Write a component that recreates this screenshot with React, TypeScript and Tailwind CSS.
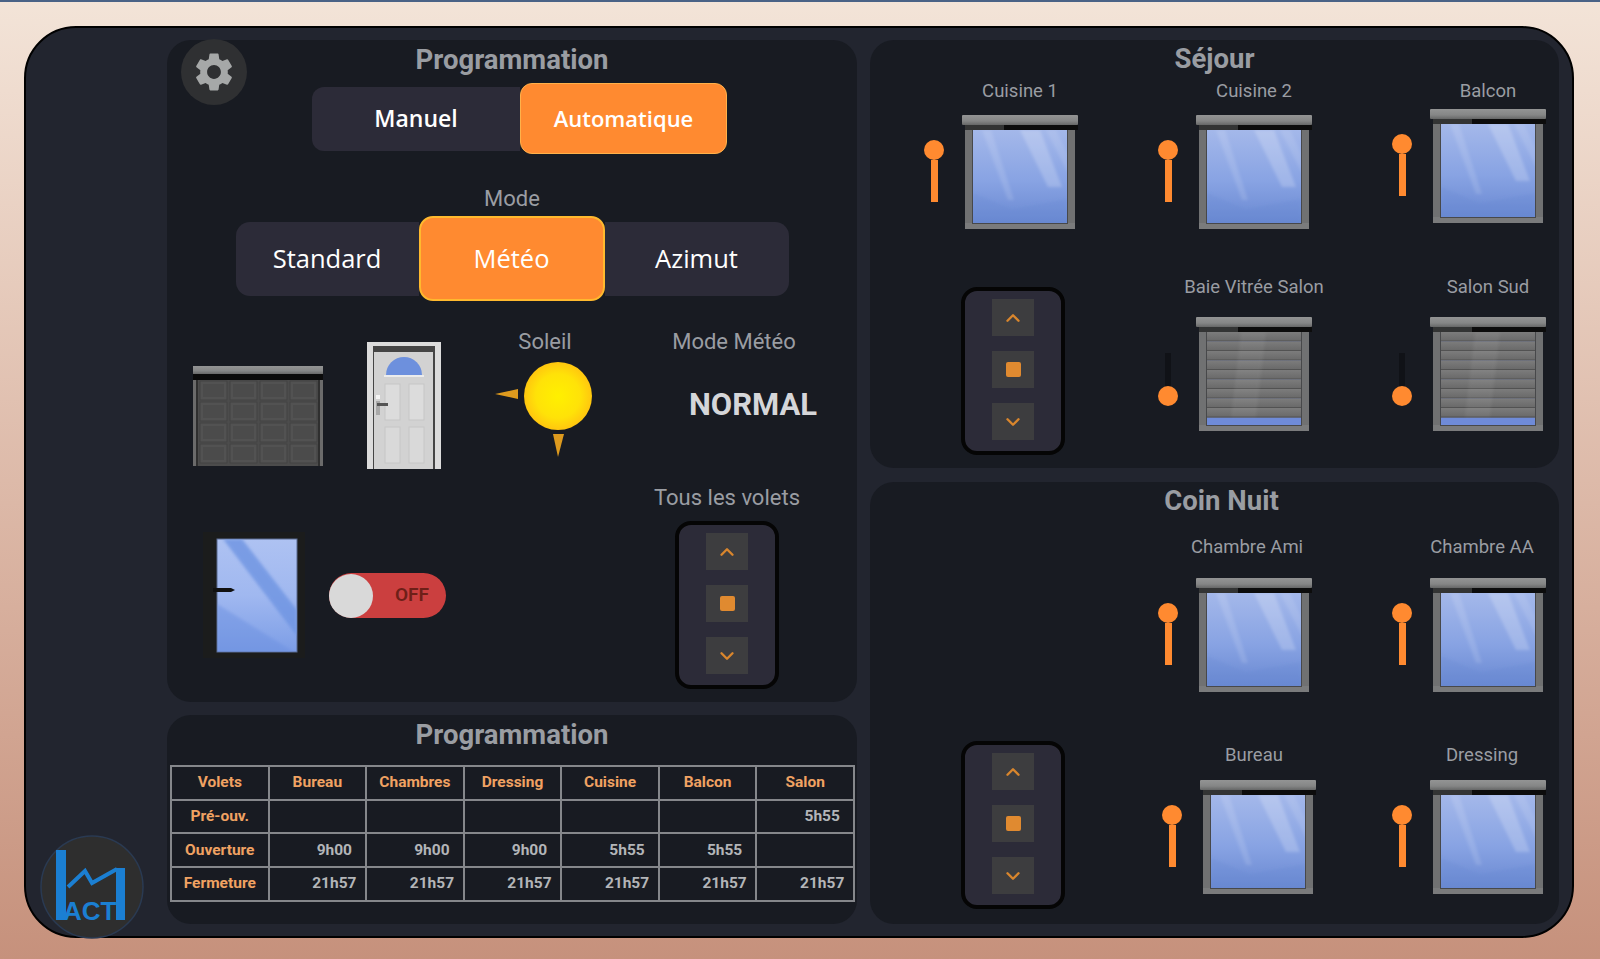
import { ChevronUp, ChevronDown } from "lucide-react";
import { MdSettings } from "react-icons/md";

function Defs() {
  return (
    <svg width="0" height="0" className="absolute">
      <defs>
        <linearGradient id="glass" x1="0" y1="0" x2="0" y2="1">
          <stop offset="0" stopColor="#a4b8ea" />
          <stop offset="0.55" stopColor="#88a3e3" />
          <stop offset="1" stopColor="#6a89d2" />
        </linearGradient>
        <linearGradient id="housing" x1="0" y1="0" x2="0" y2="1">
          <stop offset="0" stopColor="#939494" />
          <stop offset="0.6" stopColor="#858686" />
          <stop offset="1" stopColor="#666767" />
        </linearGradient>
        <linearGradient id="slat" x1="0" y1="0" x2="0" y2="1">
          <stop offset="0" stopColor="#7c7c7c" />
          <stop offset="1" stopColor="#686868" />
        </linearGradient>
        <radialGradient id="sun" cx="0.5" cy="0.5" r="0.5">
          <stop offset="0" stopColor="#fff000" />
          <stop offset="0.65" stopColor="#ffe208" />
          <stop offset="1" stopColor="#ffc60f" />
        </radialGradient>
        <linearGradient id="doorglass" x1="0" y1="0" x2="0" y2="1">
          <stop offset="0" stopColor="#aec2f2" />
          <stop offset="0.5" stopColor="#a0b8f0" />
          <stop offset="1" stopColor="#7c9de6" />
        </linearGradient>
        <filter id="soft" x="-20%" y="-20%" width="140%" height="140%">
          <feGaussianBlur stdDeviation="1.4" />
        </filter>
        <clipPath id="glassclip">
          <rect x="11" y="15" width="94" height="93" />
        </clipPath>
        <clipPath id="doorclip">
          <rect x="14" y="7" width="80" height="113" />
        </clipPath>
      </defs>
    </svg>
  );
}

function WindowArt({ closed }: { closed?: boolean }) {
  return (
    <svg width="116" height="114" viewBox="0 0 116 114" className="block shrink-0">
      <rect x="3" y="10" width="110" height="104" fill="#707172" />
      <rect x="3" y="108" width="110" height="6" fill="#7a7b7c" />
      <rect x="10" y="14" width="96" height="95" fill="#47484a" />
      <rect x="11" y="15" width="94" height="93" fill={closed ? "#6f8bd8" : "url(#glass)"} />
      {!closed && (
        <g clipPath="url(#glassclip)">
          <g filter="url(#soft)">
            <polygon points="20,15 29,15 52,85 46,85" fill="#ffffff" opacity="0.12" />
            <polygon points="58,15 78,15 100,72 86,72" fill="#ffffff" opacity="0.2" />
            <polygon points="84,15 94,15 106,40 106,58" fill="#ffffff" opacity="0.1" />
            <polygon points="11,78 50,94 105,84 105,108 11,108" fill="#5f80cf" opacity="0.18" />
          </g>
        </g>
      )}
      {closed && (
        <g>
          {[15, 24.5, 34, 43.5, 53, 62.5, 72, 81.5, 91].map((y) => (
            <g key={y}>
              <rect x="11" y={y} width="94" height="9.5" fill="url(#slat)" />
              <rect x="11" y={y + 8.5} width="94" height="1" fill="#525252" />
            </g>
          ))}
          <polygon points="45,15 70,15 60,100 35,100" fill="#ffffff" opacity="0.05" filter="url(#soft)" />
        </g>
      )}
      <rect x="42" y="10" width="74" height="5" fill="#0c0c0c" />
      <rect x="3" y="10" width="39" height="5" fill="#333434" />
      <rect x="0" y="0" width="116" height="10" rx="1" fill="url(#housing)" />
    </svg>
  );
}

function Slider({ open }: { open: boolean }) {
  if (open) {
    return (
      <div className="flex w-5 shrink-0 flex-col items-center mt-[25px]">
        <div className="h-5 w-5 rounded-full bg-[#ff8a30]" />
        <div className="h-[42px] w-[7px] bg-[#ff8a30]" />
      </div>
    );
  }
  return (
    <div className="flex w-5 shrink-0 flex-col items-center mt-[36px]">
      <div className="h-[33px] w-[6px] bg-[#101217]" />
      <div className="h-5 w-5 rounded-full bg-[#ff8a30]" />
    </div>
  );
}

function Unit({
  label,
  closed,
  labelClass = "",
  bodyClass = "",
  className = "",
}: {
  label: string;
  closed?: boolean;
  labelClass?: string;
  bodyClass?: string;
  className?: string;
}) {
  return (
    <div className={"flex flex-col " + className}>
      <div className={"ml-[38px] flex h-6 w-[116px] justify-center whitespace-nowrap text-[18.5px] leading-6 text-[#9a9da3] " + labelClass}>
        {label}
      </div>
      <div className={"flex items-start gap-[18px] " + bodyClass}>
        <Slider open={!closed} />
        <WindowArt closed={closed} />
      </div>
    </div>
  );
}

function Remote({ className = "" }: { className?: string }) {
  const btn = "flex h-[37px] w-[42px] items-center justify-center bg-[#3d3d3f] text-[#d9862d]";
  return (
    <div className={"flex h-[168px] w-[104px] shrink-0 flex-col items-center gap-[15px] rounded-[16px] border-4 border-[#050505] bg-[#2c2b38] pt-[8px] " + className}>
      <div className={btn}>
        <ChevronUp size={22} strokeWidth={2.6} />
      </div>
      <div className={btn}>
        <div className="h-[15px] w-[15px] rounded-[2px] bg-[#e08a30]" />
      </div>
      <div className={btn}>
        <ChevronDown size={22} strokeWidth={2.6} />
      </div>
    </div>
  );
}

function Garage() {
  const rows = [15, 36, 57, 78];
  const cols = [7, 37, 67, 97];
  return (
    <svg width="130" height="100" viewBox="0 0 130 100" className="block">
      <rect x="0" y="14" width="130" height="86" fill="#2f2f2f" />
      <rect x="0" y="14" width="3" height="86" fill="#6b6b6b" />
      <rect x="127" y="14" width="3" height="86" fill="#6b6b6b" />
      <rect x="5" y="14" width="120" height="86" fill="#4c4c4c" />
      {rows.map((y) =>
        cols.map((x) => (
          <g key={x + "-" + y}>
            <rect x={x} y={y} width="27" height="19" fill="#525252" stroke="#434343" strokeWidth="1" />
            <rect x={x + 3} y={y + 3} width="21" height="13" fill="#4b4b4b" />
          </g>
        ))
      )}
      <rect x="0" y="8" width="130" height="6" fill="#0a0a0a" />
      <rect x="0" y="0" width="130" height="8" fill="url(#housing)" />
    </svg>
  );
}

function Door() {
  return (
    <svg width="74" height="127" viewBox="0 0 74 127" className="block">
      <rect x="0" y="0" width="74" height="127" fill="#dcdcdc" />
      <rect x="6" y="4" width="62" height="123" fill="#454545" />
      <rect x="7" y="10" width="59" height="117" fill="#d2d2d2" />
      <path d="M19 33 A18 18 0 0 1 55 33 Z" fill="#6d90dd" />
      <rect x="17" y="33" width="40" height="2" fill="#ececec" />
      <rect x="18" y="42" width="15" height="36" fill="#dcdcdc" stroke="#c6c6c6" />
      <rect x="42" y="42" width="15" height="36" fill="#dcdcdc" stroke="#c6c6c6" />
      <rect x="18" y="85" width="15" height="36" fill="#d9d9d9" stroke="#c6c6c6" />
      <rect x="42" y="85" width="15" height="36" fill="#d9d9d9" stroke="#c6c6c6" />
      <rect x="9" y="53" width="4" height="4" fill="#f4f4f4" />
      <rect x="9" y="59" width="4" height="14" fill="#a8a8a8" />
      <rect x="10" y="61" width="11" height="3" fill="#555" />
    </svg>
  );
}

function Sun() {
  return (
    <svg width="100" height="105" viewBox="0 0 100 105" className="block">
      <circle cx="63" cy="41" r="34" fill="url(#sun)" />
      <polygon points="0,39 23,34 23,44" fill="#dd9a1e" />
      <polygon points="58,79 69,79 63,102" fill="#dd9a1e" />
    </svg>
  );
}

function GlassDoor() {
  return (
    <svg width="102" height="126" viewBox="0 0 102 126" className="block">
      <rect x="0" y="0" width="102" height="126" fill="#1b1c1c" />
      <rect x="14" y="7" width="80" height="113" fill="url(#doorglass)" stroke="#5a6a90" />
      <g clipPath="url(#doorclip)">
        <polygon points="20,7 39,7 94,78 94,104" fill="#6e94e2" opacity="0.8" filter="url(#soft)" />
        <polygon points="14,72 94,122 14,122" fill="#6b8fe0" opacity="0.45" filter="url(#soft)" />
      </g>
      <polygon points="10,56 28,56 32,58 28,60 10,60" fill="#111" />
    </svg>
  );
}

function Logo() {
  return (
    <svg width="104" height="104" viewBox="0 0 104 104" className="block">
      <circle cx="52" cy="52" r="51" fill="#2e2e2e" stroke="#2a3a52" strokeWidth="1.5" />
      <polygon points="16,15 26,15 26,85 16,85" fill="#1b7fd2" />
      <polygon points="76,33 85,33 85,85 76,85" fill="#1b7fd2" />
      <polyline points="28,52 45,36 52,48 77,34" fill="none" stroke="#1b7fd2" strokeWidth="4" />
      <text x="23" y="85" fontFamily="Liberation Sans, sans-serif" fontSize="26" fontWeight="700" fill="#1b7fd2">ACT</text>
    </svg>
  );
}

const th = "border-2 border-[#85878b] text-center font-bold text-[#f0a262]";
const td = "border-2 border-[#85878b] text-center pl-[34px] font-bold text-[#b3b5b8]";

function Row({ head, cells }: { head: string; cells: string[] }) {
  return (
    <tr className="h-[33.7px]">
      <td className={th}>{head}</td>
      {cells.map((c, i) => (
        <td key={i} className={td}>{c}</td>
      ))}
    </tr>
  );
}

const panel = "rounded-[24px] bg-[#181b22]";
const title = "h-9 text-center text-[27.5px] font-bold leading-9 text-[#9a9da2]";

export default function App() {
  return (
    <div className="relative flex h-[959px] w-full flex-col overflow-hidden bg-gradient-to-b from-[#f3e4d8] to-[#c6917c] font-['Roboto',sans-serif]">
      <Defs />
      <div className="h-[2px] bg-[#4a6286]" />
      <div className="relative ml-6 mt-6 flex h-[912px] w-[1550px] rounded-[52px] border-2 border-black bg-[#22252f] pb-[11px] pl-[141px] pr-3 pt-3">
        {/* left column */}
        <div className="flex w-[690px] shrink-0 flex-col gap-[13px]">
          <div className={"relative h-[662px] pt-[2px] " + panel}>
            <div className={title}>Programmation</div>
            <div className="mt-[5px] flex items-center justify-center pl-[15px]">
              <div className="flex h-[64px] w-[208px] items-center justify-center rounded-l-[12px] bg-[#2c2b38] font-['Open_Sans',sans-serif] text-[23px] font-semibold text-white">
                Manuel
              </div>
              <div className="flex h-[71px] w-[207px] items-center justify-center rounded-[12px] border border-[#ffb14a] bg-[#ff8a30] font-['Open_Sans',sans-serif] text-[22px] font-semibold text-white">
                Automatique
              </div>
            </div>
            <div className="mt-[33px] h-6 text-center text-[22px] leading-6 text-[#9a9da3]">Mode</div>
            <div className="mt-[5px] flex items-center justify-center font-['Open_Sans',sans-serif] text-[25.5px] text-white">
              <div className="flex h-[74px] w-[183px] items-center justify-center rounded-l-[14px] bg-[#2c2b38]">Standard</div>
              <div className="flex h-[85px] w-[186px] items-center justify-center rounded-[14px] border-2 border-[#ffb92e] bg-[#ff8a30]">Météo</div>
              <div className="flex h-[74px] w-[184px] items-center justify-center rounded-r-[14px] bg-[#2c2b38]">Azimut</div>
            </div>
            <div className="mt-[29px] flex h-[139px] items-start pl-[26px]">
              <div className="mt-[36px] shrink-0"><Garage /></div>
              <div className="ml-[44px] mt-[12px] shrink-0"><Door /></div>
              <div className="ml-[54px] w-[100px] shrink-0">
                <div className="h-6 text-center text-[22px] leading-6 text-[#9a9da3]">Soleil</div>
                <div className="mt-[1px]"><Sun /></div>
              </div>
              <div className="ml-[39px] w-[200px] shrink-0">
                <div className="h-6 text-center text-[22px] leading-6 text-[#9a9da3]">Mode Météo</div>
                <div className="mt-[31px] h-10 pl-[38px] text-center text-[31px] font-bold leading-10 text-[#d5d6d9]">NORMAL</div>
              </div>
            </div>
            <div className="mt-[17px] flex items-start pl-[36px]">
              <div className="mt-[46px] shrink-0"><GlassDoor /></div>
              <div className="ml-[24px] mt-[87px] flex h-[45px] w-[117px] shrink-0 items-center rounded-full bg-[#cb3f3f]">
                <div className="h-[44px] w-[44px] rounded-full bg-[#d9d9d9]" />
                <span className="ml-[22px] text-[19px] font-semibold text-[#6e1f18]">OFF</span>
              </div>
              <div className="ml-[229px] flex w-[104px] shrink-0 flex-col items-center">
                <div className="h-6 whitespace-nowrap text-[22px] leading-6 text-[#9a9da3]">Tous les volets</div>
                <Remote className="mt-[11px]" />
              </div>
            </div>
            <div className="absolute left-[14px] top-[-1px] flex h-[66px] w-[66px] items-center justify-center rounded-full bg-[#2f3032]">
              <MdSettings size={46} color="#a6a8a8" />
            </div>
          </div>
          <div className={"h-[209px] pl-[3px] pt-[2px] " + panel}>
            <div className={title + " pr-[3px]"}>Programmation</div>
            <table className="mt-[12px] w-[685px] table-fixed border-collapse text-[15.5px]">
              <tbody>
                <tr className="h-[33.7px]">
                  {["Volets", "Bureau", "Chambres", "Dressing", "Cuisine", "Balcon", "Salon"].map((h) => (
                    <td key={h} className={th}>{h}</td>
                  ))}
                </tr>
                <Row head="Pré-ouv." cells={["", "", "", "", "", "5h55"]} />
                <Row head="Ouverture" cells={["9h00", "9h00", "9h00", "5h55", "5h55", ""]} />
                <Row head="Fermeture" cells={["21h57", "21h57", "21h57", "21h57", "21h57", "21h57"]} />
              </tbody>
            </table>
          </div>
        </div>

        {/* right column */}
        <div className="ml-[13px] flex w-[689px] shrink-0 flex-col gap-[14px]">
          <div className={"h-[428px] pt-[1px] " + panel}>
            <div className={title}>Séjour</div>
            <div className="mt-[2px] grid grid-cols-[154px_154px_154px] gap-x-[80px] gap-y-[46px] pl-[54px]">
              <Unit label="Cuisine 1" bodyClass="mt-[12px]" />
              <Unit label="Cuisine 2" bodyClass="mt-[12px]" />
              <Unit label="Balcon" bodyClass="mt-[6px]" />
              <div className="ml-[37px] mt-[12px]"><Remote /></div>
              <Unit label="Baie Vitrée Salon" closed bodyClass="mt-[18px]" />
              <Unit label="Salon Sud" closed bodyClass="mt-[18px]" />
            </div>
          </div>
          <div className={"h-[442px] pt-[1px] " + panel}>
            <div className="h-9 pl-[14px] text-center text-[27.5px] font-bold leading-9 text-[#9a9da2]">Coin Nuit</div>
            <div className="mt-[16px] grid grid-cols-[154px_154px_154px] gap-x-[80px] gap-y-[51px] pl-[54px]">
              <div />
              <Unit label="Chambre Ami" labelClass="pr-[14px]" bodyClass="mt-[19px]" />
              <Unit label="Chambre AA" labelClass="pr-[12px]" bodyClass="mt-[19px]" />
              <div className="ml-[37px] mt-[-2px]"><Remote /></div>
              <Unit label="Bureau" className="pl-[4px]" labelClass="pr-[8px]" bodyClass="mt-[13px]" />
              <Unit label="Dressing" labelClass="pr-[12px]" bodyClass="mt-[13px]" />
            </div>
          </div>
        </div>
      </div>
      <div className="absolute left-[40px] top-[835px]"><Logo /></div>
    </div>
  );
}
